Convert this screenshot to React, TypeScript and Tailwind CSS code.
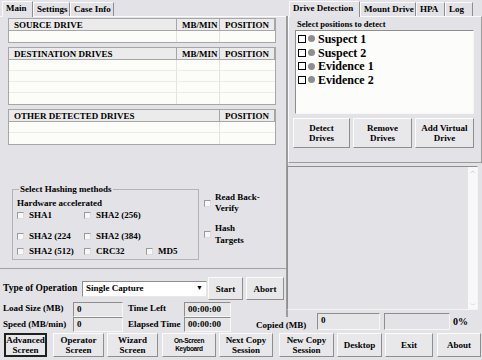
import React from "react";

const raised =
  "border border-t-[#fbfbfb] border-l-[#fbfbfb] border-r-[#8e8e8e] border-b-[#8e8e8e] bg-[#e8e8ea]";
const sunken =
  "border border-t-[#8e8e8e] border-l-[#8e8e8e] border-r-[#f6f6f6] border-b-[#f6f6f6]";

const HeadCell: React.FC<{ w: string; children?: React.ReactNode; grow?: boolean }> = ({
  w,
  children,
  grow,
}) => (
  <div
    className={`${grow ? "flex-1" : w} h-full border-r border-[#a6a6a6] bg-[#ebebeb] px-[5px] text-[9px] font-bold leading-[12px] whitespace-nowrap`}
  >
    {children}
  </div>
);

const DriveTable: React.FC<{ title: string; mb?: boolean; rows: number; className?: string }> = ({
  title,
  mb = true,
  rows,
  className = "",
}) => (
  <div className={`ml-[8px] w-[268px] border border-[#a6a6a6] bg-[#fcfcf8] ${className}`}>
    <div className="flex h-[12px] border-b border-[#a6a6a6]">
      <HeadCell w="" grow>
        {title}
      </HeadCell>
      {mb && <HeadCell w="w-[43px]">MB/MIN</HeadCell>}
      <HeadCell w="w-[55px]">POSITION</HeadCell>
    </div>
    {Array.from({ length: rows }).map((_, i) => (
      <div key={i} className="flex h-[11px] border-b border-[#ecece4] last:border-b-0">
        <div className="flex-1 border-r border-[#e4e4dc]" />
        {mb && <div className="w-[43px] border-r border-[#e4e4dc]" />}
        <div className="w-[55px]" />
      </div>
    ))}
  </div>
);

const Box: React.FC<{ size?: string }> = ({ size = "w-[7px] h-[7px]" }) => (
  <span
    className={`${size} inline-block shrink-0 border border-t-[#9a9a9a] border-l-[#9a9a9a] border-r-[#dcdcdc] border-b-[#dcdcdc] bg-[#f7f7f7]`}
  />
);

const Hash: React.FC<{ label: string; w: string }> = ({ label, w }) => (
  <div className={`${w} flex items-center gap-[5px]`}>
    <Box />
    <span>{label}</span>
  </div>
);

const Btn: React.FC<{ w: string; children: React.ReactNode; className?: string }> = ({
  w,
  children,
  className = "",
}) => (
  <div
    className={`${w} ${raised} flex items-center justify-center text-center text-[9px] font-bold leading-[10px] ${className}`}
  >
    {children}
  </div>
);

const Field: React.FC<{ w: string; value?: string; className?: string }> = ({ w, value, className = "" }) => (
  <div className={`${w} h-[15px] ${sunken} bg-[#e6e6e8] px-[3px] text-[9px] font-bold leading-[13px] ${className}`}>
    {value}
  </div>
);

const Tab: React.FC<{ active?: boolean; w: string; children: React.ReactNode }> = ({ active, w, children }) => (
  <div
    className={`${w} ${
      active ? "h-[16px] -mb-px z-10 bg-[#e4e4e8]" : "h-[14px] mt-[2px] bg-[#e2e2e6]"
    } border border-b-0 border-t-[#fbfbfb] border-l-[#fbfbfb] border-r-[#8e8e8e] px-[3px] text-[9px] font-bold leading-[13px] whitespace-nowrap`}
  >
    {children}
  </div>
);

const Position: React.FC<{ label: string }> = ({ label }) => (
  <div className="flex h-[13.7px] items-center">
    <span className="ml-[2px] h-[8px] w-[8px] border border-black bg-white" />
    <span className="ml-[2px] h-[7px] w-[7px] rounded-full bg-[#8e8e8e]" />
    <span className="ml-[3px] text-[12px] font-bold leading-[12px]">{label}</span>
  </div>
);

export default function App() {
  return (
    <div className="flex h-[360px] w-[482px] flex-col overflow-hidden bg-[#e3e3e7] font-['Liberation_Serif',serif] text-black">
      <div className="flex h-[332px]">
        {/* left side */}
        <div className="flex w-[288px] flex-col">
          <div className="flex items-end pl-[2px]">
            <Tab active w="w-[31px]">Main</Tab>
            <Tab w="w-[37px]">Settings</Tab>
            <Tab w="w-[44px]">Case Info</Tab>
          </div>
          <div className="flex flex-col border-r-2 border-[#9c9c9c]">
            <div className="h-[253px] border-b border-[#a0a0a0] border-t border-t-[#fbfbfb] pt-px">
              <DriveTable title="SOURCE DRIVE" rows={1} />
              <DriveTable title="DESTINATION DRIVES" rows={4} className="mt-[4px]" />
              <DriveTable title="OTHER DETECTED DRIVES" mb={false} rows={2} className="mt-[4px]" />

              <div className="mt-[39px] flex items-start">
                <fieldset className="ml-[12px] h-[76px] w-[187px] border border-[#b4b4b4] px-[4px] text-[9px] font-bold leading-[10px]">
                  <legend className="ml-[2px] px-[1px] leading-[10px]">Select Hashing methods</legend>
                  <div className="mt-[4px]">Hardware accelerated</div>
                  <div className="mt-[2px] flex h-[10px]">
                    <Hash label="SHA1" w="w-[67px]" />
                    <Hash label="SHA2 (256)" w="w-[62px]" />
                  </div>
                  <div className="mt-[11px] flex h-[10px]">
                    <Hash label="SHA2 (224" w="w-[67px]" />
                    <Hash label="SHA2 (384)" w="w-[62px]" />
                  </div>
                  <div className="mt-[5px] flex h-[10px]">
                    <Hash label="SHA2 (512)" w="w-[67px]" />
                    <Hash label="CRC32" w="w-[62px]" />
                    <Hash label="MD5" w="w-[40px]" />
                  </div>
                </fieldset>
                <div className="ml-[5px] mt-[8px] flex flex-col text-[9px] font-bold leading-[11px]">
                  <div className="flex items-center gap-[4px]">
                    <Box size="w-[7px] h-[7px]" />
                    <span>
                      Read Back-
                      <br />
                      Verify
                    </span>
                  </div>
                  <div className="mt-[8px] flex items-center gap-[4px]">
                    <Box size="w-[7px] h-[7px]" />
                    <span className="leading-[12px]">
                      Hash
                      <br />
                      Targets
                    </span>
                  </div>
                </div>
              </div>
            </div>

            <div className="mt-[8px] flex h-[23px] items-center pl-[3px] text-[9px] font-bold">
              <span className="w-[79px] text-[9.5px]">Type of Operation</span>
              <div className="flex h-[16px] w-[125px] items-center border border-t-[#8e8e8e] border-l-[#8e8e8e] border-r-[#e8e8e8] border-b-[#e8e8e8] bg-white pl-[3px]">
                <span className="flex-1">Single Capture</span>
                <span className="mr-px flex h-[12px] w-[11px] items-center justify-center text-[7px] leading-none">
                  ▼
                </span>
              </div>
              <Btn w="w-[35px] h-[23px] ml-[1px]">Start</Btn>
              <Btn w="w-[38px] h-[23px] ml-[3px]">Abort</Btn>
            </div>

            <div className="mt-[1px] flex h-[16px] items-center pl-[3px] text-[9px] font-bold">
              <span className="w-[70px]">Load Size (MB)</span>
              <Field w="w-[50px]" value="0" />
              <span className="ml-[5px] w-[56px]">Time Left</span>
              <Field w="w-[47px]" value="00:00:00" />
            </div>
          </div>
          <div className="flex h-[15px] items-center pl-[3px] text-[9px] font-bold">
            <span className="w-[70px]">Speed (MB/min)</span>
            <Field w="w-[50px]" value="0" />
            <span className="ml-[5px] w-[56px]">Elapsed Time</span>
            <Field w="w-[47px]" value="00:00:00" />
          </div>
        </div>

        {/* right side */}
        <div className="flex flex-1 flex-col">
          <div className="flex items-end pl-[1px]">
            <Tab active w="w-[71px]">Drive Detection</Tab>
            <Tab w="w-[56px]">Mount Drive</Tab>
            <Tab w="w-[29px]">HPA</Tab>
            <Tab w="w-[28px]">Log</Tab>
          </div>
          <div className="h-[147px] border border-t-[#fbfbfb] border-l-[#fbfbfb] border-r-[#9c9c9c] border-b-[#9c9c9c] px-[6px]">
            <div className="pl-[2px] pt-[2px] text-[8.5px] font-bold leading-[11px]">Select positions to detect</div>
            <div className={`h-[84px] w-[179px] ${sunken} bg-[#fcfcfa] pt-[1px]`}>
              <Position label="Suspect 1" />
              <Position label="Suspect 2" />
              <Position label="Evidence 1" />
              <Position label="Evidence 2" />
            </div>
            <div className="mt-[4px] flex gap-[3px]">
              <Btn w="w-[57px] h-[30px] -ml-[2px]">
                Detect
                <br />
                Drives
              </Btn>
              <Btn w="w-[59px] h-[30px]">
                Remove
                <br />
                Drives
              </Btn>
              <Btn w="w-[59px] h-[30px]">
                Add Virtual
                <br />
                Drive
              </Btn>
            </div>
          </div>
          <div className="ml-[-1px] mr-[4px] mt-[3px] flex h-[144px] border border-t-[#8e8e8e] border-l-[#8e8e8e] border-r-[#f4f4f4] border-b-[#f4f4f4]">
            <div className="flex-1" />
            <div className="flex w-[9px] flex-col items-center justify-between bg-[#f8f8fa] text-[6px] leading-[8px] text-[#b0b0b0]">
              <span>︿</span>
              <span>﹀</span>
            </div>
          </div>
          <div className="mt-[3px] flex h-[17px] items-center text-[9px] font-bold">
            <span className="-ml-[32px] mt-[9px] w-[61px]">Copied (MB)</span>
            <Field w="w-[63px] h-[17px]" value="0" />
            <div className={`ml-[4px] h-[17px] w-[66px] ${sunken}`} />
            <span className="ml-[3px] text-[10px]">0%</span>
          </div>
        </div>
      </div>

      {/* bottom buttons */}
      <div className="flex h-[25px] items-center pl-[4px]">
        <Btn w="w-[43px] h-[24px] !border-[#202020] !border-2">
          Advanced
          <br />
          Screen
        </Btn>
        <Btn w="w-[51px] h-[24px] ml-[6px]">
          Operator
          <br />
          Screen
        </Btn>
        <Btn w="w-[51px] h-[24px] ml-[3px]">
          Wizard
          <br />
          Screen
        </Btn>
        <Btn w="w-[54px] h-[24px] ml-[4px]">
          <span className="font-['Liberation_Sans',sans-serif] text-[6.5px] leading-[8px] tracking-[-0.3px]">
            On-Screen
            <br />
            Keyboard
          </span>
        </Btn>
        <Btn w="w-[54px] h-[24px] ml-[3px]">
          Next Copy
          <br />
          Session
        </Btn>
        <Btn w="w-[55px] h-[24px] ml-[6px]">
          New Copy
          <br />
          Session
        </Btn>
        <Btn w="w-[45px] h-[24px] ml-[3px]">Desktop</Btn>
        <Btn w="w-[48px] h-[24px] ml-[3px]">Exit</Btn>
        <Btn w="w-[44px] h-[24px] ml-[4px]">About</Btn>
      </div>
    </div>
  );
}
